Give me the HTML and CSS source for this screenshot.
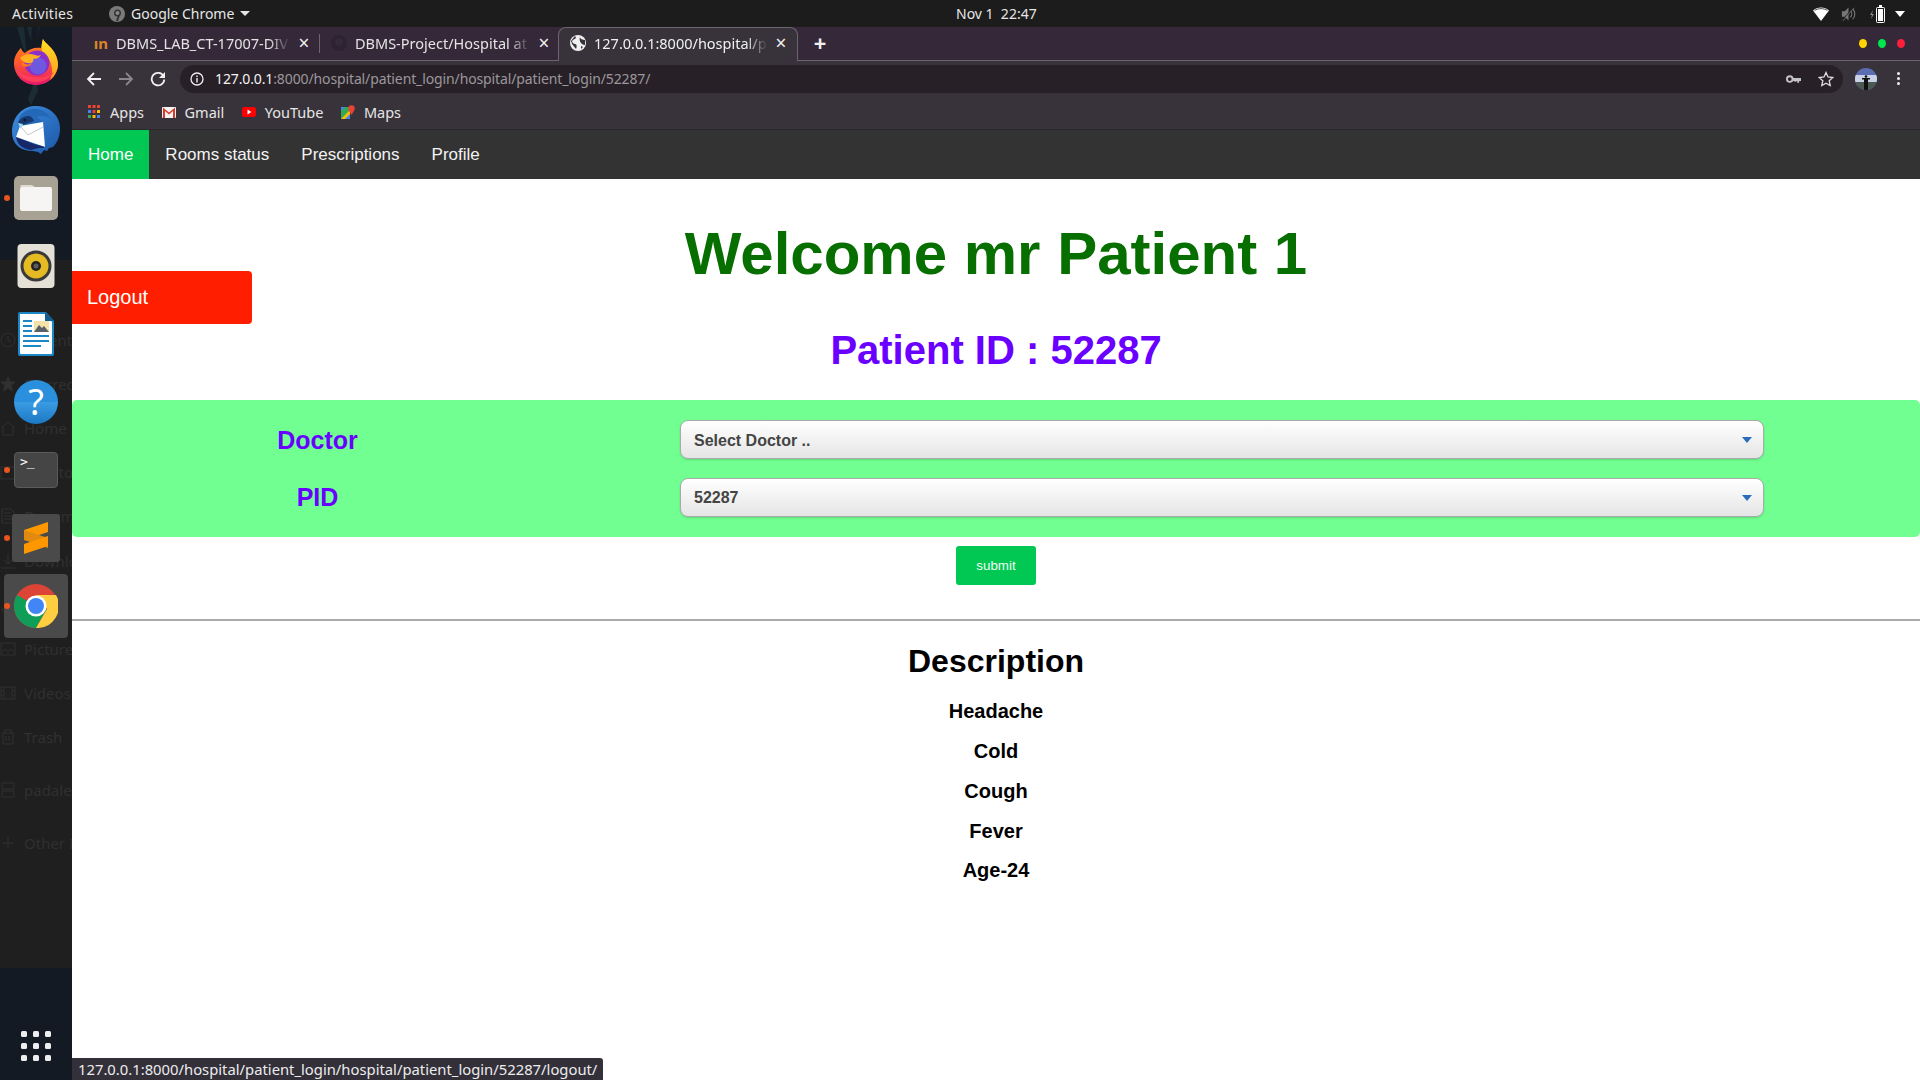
FILE: index.html
```html
<!DOCTYPE html>
<html lang="en">
<head>
    <meta charset="UTF-8">
    <meta name="viewport" content="width=device-width, initial-scale=1.0">
    <title>Patient home</title>
    <link rel="stylesheet" href="styles.css">
</head>
<body>
    <div class="topbar">
        <div class="topbar-left">
            <span class="activities">Activities</span>
            <span class="app-menu">
                <svg class="app-menu-icon" viewBox="0 0 16 16"><circle cx="8" cy="8" r="8" fill="#7a7a7a"/><circle cx="8.500" cy="7" r="3.500" fill="#333"/><path d="M10 9 8 15" stroke="#333" stroke-width="2"/><circle cx="8.500" cy="7" r="2" fill="#888"/></svg>
                Google Chrome
                <span class="caret"></span>
            </span>
        </div>
        <div class="clock">Nov 1&nbsp;&nbsp;22:47</div>
        <div class="tray">
            <svg class="tray-wifi" viewBox="0 0 16 14"><path d="M0 3.500C4 -.5 12 -.5 16 3.500L8 14Z" fill="#fff"/><path d="M1.600 3.600C5 1 11 1 14.400 3.600" fill="none" stroke="#222" stroke-width=".8"/></svg>
            <svg class="tray-sound" viewBox="0 0 16 16"><path d="M1 5h3l4-4v14l-4-4H1Z" fill="#777"/><path d="M10 4.500c2 2 2 5 0 7M12.500 2.500c3 3 3 8 0 11" fill="none" stroke="#777" stroke-width="1.200"/><path d="M1 15 13 1" stroke="#222" stroke-width="1"/><path d="M2 15.500 14 1.500" stroke="#777" stroke-width=".8"/></svg>
            <svg class="tray-battery" viewBox="0 0 15 18"><path d="M3 5 0 10h2l-1 4 3-5H2Z" fill="#888"/><rect x="6.500" y="2.500" width="8" height="15" rx="1" fill="none" stroke="#fff"/><rect x="9" y="0" width="3" height="2" fill="#fff"/><rect x="8" y="4" width="5" height="12" fill="#fff"/></svg>
            <span class="tray-caret"></span>
        </div>
    </div>

    <div class="desktop">
        <div class="dock">
            <svg class="wallpaper" viewBox="0 0 72 90"><path d="M17 0l7 0 3 30-5-12ZM27 0h5l-1 14ZM40 0l-4 14 3-14ZM36 50l-8 22 3 6 7-14ZM28 82l-3 8 4-3Z" fill="#1b2c32"/></svg>
            <div class="behind-window">
                <div class="place place-recent"><svg viewBox="0 0 16 16"><circle cx="8" cy="8" r="7"/><path d="M8 4v4l3 2"/></svg>Recent</div>
                <div class="place"><svg viewBox="0 0 16 16"><path d="M8 1l2 5h5l-4 3.500 1.500 5.500L8 12l-4.500 3L5 9.500 1 6h5Z" class="solid"/></svg>Starred</div>
                <div class="place"><svg viewBox="0 0 16 16"><path d="M1 8l7-6 7 6M3 7v8h10V7"/></svg>Home</div>
                <div class="place"><svg viewBox="0 0 16 16"><rect x="1" y="3" width="14" height="12"/></svg>Desktop</div>
                <div class="place"><svg viewBox="0 0 16 16"><path d="M2 1h9l3 3v11H2ZM4 5h7M4 8h8M4 11h8"/></svg>Documents</div>
                <div class="place"><svg viewBox="0 0 16 16"><path d="M8 1v10M4 7l4 4 4-4M1 15h14"/></svg>Downloads</div>
                <div class="place"><svg viewBox="0 0 16 16"><path d="M6 13V3l8-2v10"/><circle cx="4" cy="13" r="2"/><circle cx="12" cy="11" r="2"/></svg>Music</div>
                <div class="place"><svg viewBox="0 0 16 16"><rect x="1" y="2" width="14" height="12"/><path d="M1 12l4-4 3 3 3-3 4 4"/></svg>Pictures</div>
                <div class="place"><svg viewBox="0 0 16 16"><rect x="1" y="2" width="14" height="12"/><path d="M4 2v12M12 2v12M1 6h3M1 10h3M12 6h3M12 10h3"/></svg>Videos</div>
                <div class="place"><svg viewBox="0 0 16 16"><path d="M2 4h12M5 4V1h6v3M3 4v11h10V4M6 7v5M9 7v5"/></svg>Trash</div>
                <div class="place place-gap"><svg viewBox="0 0 16 16"><rect x="2" y="1" width="12" height="6"/><rect x="2" y="9" width="12" height="6"/></svg>padalex</div>
                <div class="place place-gap"><svg viewBox="0 0 16 16"><path d="M8 2v12M2 8h12"/></svg>Other Locations</div>
            </div>

            <div class="dock-list">
                <div class="dock-item">
                    <svg class="icon-fox" viewBox="0 0 44 46">
                        <defs>
                            <linearGradient id="foxBody" x1="0" y1="0" x2="0" y2="1"><stop offset="0" stop-color="#ff8a1f"/><stop offset=".5" stop-color="#ff5a2e"/><stop offset="1" stop-color="#e5176f"/></linearGradient>
                            <linearGradient id="foxTail" x1="0" y1="0" x2="0" y2="1"><stop offset="0" stop-color="#ffe226"/><stop offset="1" stop-color="#ff9a1e"/></linearGradient>
                        </defs>
                        <path d="M7 9c1 3 2 4 4 5 4-4 10-6 16-5 1-4 1-7 2-9 2 5 14 10 15 25 0 12-10 21-22 21C10 46 0 37 0 24 0 18 3 13 7 9Z" fill="url(#foxBody)"/>
                        <path d="M29 0c2 5 14 10 15 25 0 6-3 12-8 16 4-8 3-20-8-29-1-4 0-8 1-12Z" fill="url(#foxTail)"/>
                        <circle cx="23" cy="24" r="12.500" fill="#8a2fc9"/>
                        <circle cx="24" cy="27" r="8.500" fill="#6e58e0"/>
                        <path d="M6 19c4-4 10-5 15-3 2 1 4 1 6 0-2 3-5 4-8 4 1 2 0 3-2 4-4 1-9-1-11-5Z" fill="#ffb020"/>
                        <path d="M8 23c3 3 8 3 10 1-1 3-6 5-10 3Z" fill="#ff7a1f"/>
                        <path d="M2 30c3 8 11 13 20 13 8 0 14-4 18-10-5 4-11 6-17 5-9 0-16-2-21-8Z" fill="#ff3f5a"/>
                    </svg>
                </div>
                <div class="dock-item">
                    <svg class="icon-48" viewBox="0 0 48 48">
                        <defs><linearGradient id="birdBody" x1="0" y1="0" x2="1" y2="1"><stop offset="0" stop-color="#3f8ee0"/><stop offset="1" stop-color="#1c57a8"/></linearGradient></defs>
                        <path d="M22 0c14-1 26 9 26 22 0 9-3 15-7 19l-4 1-2 3-3-1-3 4-3-2-5-1C8 45 0 38 0 26 0 12 9 1 22 0Z" fill="url(#birdBody)"/>
                        <path d="M7 12c3-6 10-10 18-9 7 1 12 5 14 10-4-3-10-4-14-2l6 5-22 4Z" fill="#2468b8"/>
                        <path d="M6 16c2-3 6-6 10-6 3 0 5 2 6 5l-14 5Z" fill="#16386f"/>
                        <path d="M8 20 31 16 33 41 4 31Z" fill="#fff"/>
                        <path d="M8 20l8 9 15-8" fill="none" stroke="#b8b8c0" stroke-width=".8"/>
                        <path d="M4 31c1 7 6 12 15 13l8-2 4 0 2-1-11-3Z" fill="#16286a"/>
                        <circle cx="13" cy="14" r="1.500" fill="#0e1c36"/>
                        <path d="M6 17l5 1-2 5Z" fill="#9fdcf0"/>
                    </svg>
                </div>
                <div class="dock-item">
                    <span class="dock-dot"></span>
                    <svg class="icon-44" viewBox="0 0 44 44">
                        <rect width="44" height="44" rx="5" fill="#a8a294"/>
                        <path d="M6 11a2 2 0 0 1 2-2h10l4 3H8Z" fill="#dedbd3"/>
                        <path d="M6 13c0-1 1-2 2-2h28a2 2 0 0 1 2 2v20a2 2 0 0 1-2 2H8a2 2 0 0 1-2-2Z" fill="#f6f5f4"/>
                    </svg>
                </div>
                <div class="dock-item">
                    <svg class="icon-44" viewBox="0 0 44 44">
                        <rect x="3.500" width="37" height="44" rx="4" fill="#e4e0d6"/>
                        <circle cx="22" cy="22" r="15.500" fill="#3a3a3a"/>
                        <circle cx="22" cy="22" r="12.500" fill="#e5bb24"/>
                        <circle cx="22" cy="22" r="5" fill="#222"/>
                        <circle cx="22" cy="22" r="2.500" fill="#5c5c5c"/>
                    </svg>
                </div>
                <div class="dock-item">
                    <svg class="icon-44" viewBox="0 0 44 44">
                        <path d="M4 2a2 2 0 0 1 2-2h26l8 9v33a2 2 0 0 1-2 2H6a2 2 0 0 1-2-2Z" fill="#1d87c6"/>
                        <path d="M6 2h25l7 8v31a1 1 0 0 1-1 1H7a1 1 0 0 1-1-1Z" fill="#fff"/>
                        <path d="M31 0l9 9h-9Z" fill="#0f5d8f"/>
                        <rect x="9" y="8" width="9" height="2" fill="#1d87c6"/>
                        <rect x="9" y="13" width="9" height="2" fill="#1d87c6"/>
                        <rect x="9" y="18" width="9" height="2" fill="#1d87c6"/>
                        <rect x="9" y="23" width="26" height="2" fill="#1d87c6"/>
                        <rect x="9" y="28" width="26" height="2" fill="#1d87c6"/>
                        <rect x="9" y="33" width="18" height="2" fill="#1d87c6"/>
                        <rect x="20" y="9" width="15" height="11" fill="#f3e3a8"/>
                        <path d="M20 20l5-7 3 3 2-2 5 6Z" fill="#5a6068"/>
                    </svg>
                </div>
                <div class="dock-item">
                    <svg class="icon-44" viewBox="0 0 44 44">
                        <defs><linearGradient id="helpBall" x1="0" y1="0" x2="0" y2="1"><stop offset="0" stop-color="#2a8fdc"/><stop offset=".5" stop-color="#2a8fdc"/><stop offset=".5" stop-color="#3a9ce2"/><stop offset="1" stop-color="#1c78c4"/></linearGradient></defs>
                        <circle cx="22" cy="22" r="22" fill="url(#helpBall)"/>
                        <text x="22" y="35" class="help-mark" text-anchor="middle">?</text>
                    </svg>
                </div>
                <div class="dock-item">
                    <span class="dock-dot"></span>
                    <div class="terminal-tile"><span>&gt;_</span></div>
                </div>
                <div class="dock-item">
                    <span class="dock-dot"></span>
                    <svg class="icon-48" viewBox="0 0 48 48">
                        <rect width="48" height="48" rx="3" fill="#4a4a4a"/>
                        <path d="M36 8v10L12 26V16Z" fill="#ff9800"/>
                        <path d="M12 26l24 8v-10L12 16Z" fill="#e08a10"/>
                        <path d="M12 30l24-8v10L12 40Z" fill="#ff9800"/>
                    </svg>
                </div>
                <div class="dock-item dock-item-active">
                    <span class="dock-dot"></span>
                    <svg class="icon-44" viewBox="0 0 44 44">
                        <circle cx="22" cy="22" r="22" fill="#db4437"/>
                        <path d="M22 22 3 11A22 22 0 0 0 22 44l11-19Z" fill="#0f9d58"/>
                        <path d="M22 11h20A22 22 0 0 1 22 44l11-19Z" fill="#ffcd40"/>
                        <circle cx="22" cy="22" r="10.500" fill="#fff"/>
                        <circle cx="22" cy="22" r="8" fill="#4285f4"/>
                    </svg>
                </div>
            </div>

            <div class="apps-grid">
                <i></i><i></i><i></i><i></i><i></i><i></i><i></i><i></i><i></i>
            </div>
        </div>

        <div class="browser">
            <div class="tabstrip">
                <div class="tab tab-first">
                    <span class="tab-favicon favicon-in">ın</span>
                    <span class="tab-title">DBMS_LAB_CT-17007-DIV</span>
                    <span class="tab-close">×</span>
                </div>
                <div class="tab tab-second">
                    <svg class="tab-favicon" viewBox="0 0 16 16"><circle cx="8" cy="8" r="8" fill="#2d2232"/><circle cx="8" cy="7" r="4" fill="#352839"/></svg>
                    <span class="tab-title">DBMS-Project/Hospital at</span>
                    <span class="tab-close">×</span>
                </div>
                <div class="tab tab-active">
                    <svg class="tab-favicon" viewBox="0 0 16 16"><circle cx="8" cy="8" r="8" fill="#f0f0f0"/><path d="M5 1c2 2 0 3-2 4s0 4 2 4 2 3 1 5L2 9 1 6ZM10 2c0 2 3 3 5 3l0 5c-2 0-3-1-4-2s-2-4-1-6ZM11 11l2 1-2 2Z" fill="#38333a"/></svg>
                    <span class="tab-title">127.0.0.1:8000/hospital/p</span>
                    <span class="tab-close">×</span>
                </div>
                <span class="tab-new">+</span>
                <div class="window-controls">
                    <span class="wc wc-yellow"></span>
                    <span class="wc wc-green"></span>
                    <span class="wc wc-red"></span>
                </div>
            </div>

            <div class="toolbar">
                <svg class="tool-icon" viewBox="0 0 16 16"><path d="M15 8H2M8 2 2 8l6 6" class="tool-line"/></svg>
                <svg class="tool-icon tool-off" viewBox="0 0 16 16"><path d="M1 8h13M8 2l6 6-6 6" class="tool-line"/></svg>
                <svg class="tool-icon" viewBox="0 0 16 16"><path d="M13.500 5A6.300 6.300 0 1 0 14.300 8.500" class="tool-line"/><path d="M15 1v6H9Z" fill="#f1f1f1"/></svg>
                <div class="omnibox">
                    <svg class="omni-info" viewBox="0 0 14 14"><circle cx="7" cy="7" r="6" fill="none" stroke="#eee" stroke-width="1.300"/><rect x="6.300" y="6" width="1.400" height="4.500" fill="#eee"/><rect x="6.300" y="3.500" width="1.400" height="1.500" fill="#eee"/></svg>
                    <span class="url"><b>127.0.0.1</b>:8000/hospital/patient_login/hospital/patient_login/52287/</span>
                    <svg class="omni-key" viewBox="0 0 16 10"><circle cx="4" cy="5" r="3" fill="none" stroke="#c4c4c4" stroke-width="2"/><path d="M7 4h9v3h-2v2h-2V7h-1v1H9V7H7Z" fill="#c4c4c4"/></svg>
                    <svg class="omni-star" viewBox="0 0 16 16"><path d="M8 1.500l2 4.500 4.800.5-3.600 3.200 1 4.800L8 12.200 3.800 14.500l1-4.800L1.200 6.500 6 6Z" fill="none" stroke="#ddd" stroke-width="1.300"/></svg>
                </div>
                <svg class="avatar" viewBox="0 0 22 22">
                    <defs><clipPath id="avatarClip"><circle cx="11" cy="11" r="11"/></clipPath></defs>
                    <g clip-path="url(#avatarClip)">
                        <rect width="22" height="22" fill="#5a6db0"/>
                        <rect y="7" width="22" height="7" fill="#c9d2e6"/>
                        <rect y="14" width="22" height="8" fill="#4a5a50"/>
                        <path d="M7 10h8v1.500h-2V22H9V11.500H7Z" fill="#111"/>
                        <circle cx="11" cy="8.500" r="1.300" fill="#111"/>
                    </g>
                </svg>
                <span class="menu-dots"><i></i><i></i><i></i></span>
            </div>

            <div class="bookmarks">
                <span class="bookmark">
                    <svg class="bm-icon" viewBox="0 0 14 14">
                        <rect x="1" y="0" width="3" height="3" fill="#ea4335"/><rect x="5.500" y="0" width="3" height="3" fill="#ea4335"/><rect x="10" y="0" width="3" height="3" fill="#ea4335"/>
                        <rect x="1" y="5" width="3" height="3" fill="#4285f4"/><rect x="5.500" y="5" width="3" height="3" fill="#ea4335"/><rect x="10" y="5" width="3" height="3" fill="#fbbc05"/>
                        <rect x="1" y="10" width="3" height="3" fill="#34a853"/><rect x="5.500" y="10" width="3" height="3" fill="#fbbc05"/><rect x="10" y="10" width="3" height="3" fill="#4285f4"/>
                    </svg>
                    Apps
                </span>
                <span class="bookmark">
                    <svg class="bm-icon" viewBox="0 0 14 14"><rect y="2" width="14" height="11" rx="1" fill="#f4f4f4"/><path d="M1 2.500 7 7.500l6-5V13h-2V6L7 9.500 3 6v7H1Z" fill="#d93a2b"/></svg>
                    Gmail
                </span>
                <span class="bookmark">
                    <svg class="bm-icon" viewBox="0 0 14 14"><rect y="2" width="14" height="10" rx="2.500" fill="#f00"/><path d="M5.500 4.500 9.500 7l-4 2.500Z" fill="#fff"/></svg>
                    YouTube
                </span>
                <span class="bookmark">
                    <svg class="bm-icon" viewBox="0 0 14 14"><path d="M0 2h9v12H0Z" fill="#34a853"/><path d="M0 14 9 5v9Z" fill="#fbbc05"/><path d="M0 2h4l-4 4Z" fill="#4285f4"/><path d="M4 14 9 9v5Z" fill="#4285f4"/><circle cx="10.500" cy="3.500" r="3.200" fill="#ea4335"/><path d="M8 5.500 10.500 10 13 5.500Z" fill="#ea4335"/></svg>
                    Maps
                </span>
            </div>

            <nav class="navbar">
                <a class="nav-link nav-active">Home</a>
                <a class="nav-link">Rooms status</a>
                <a class="nav-link">Prescriptions</a>
                <a class="nav-link">Profile</a>
            </nav>

            <main class="page">
                <div class="page-head">
                    <a class="logout">Logout</a>
                    <div class="titles">
                        <h1 class="welcome">Welcome mr Patient 1</h1>
                        <h2 class="patient-id">Patient ID : 52287</h2>
                    </div>
                </div>

                <form>
                    <div class="form-panel">
                        <label class="form-label form-label-first">Doctor</label>
                        <div class="select-wrap">
                            <select class="form-select form-select-first"><option>Select Doctor ..</option></select>
                        </div>
                        <label class="form-label">PID</label>
                        <div class="select-wrap">
                            <select class="form-select"><option>52287</option></select>
                        </div>
                    </div>
                    <div class="submit-row"><button type="button" class="submit-btn">submit</button></div>
                </form>

                <hr class="divider">

                <section class="description">
                    <h2>Description</h2>
                    <p>Headache</p>
                    <p>Cold</p>
                    <p>Cough</p>
                    <p>Fever</p>
                    <p>Age-24</p>
                </section>
            </main>

            <div class="status-bubble">127.0.0.1:8000/hospital/patient_login/hospital/patient_login/52287/logout/</div>
        </div>
    </div>
</body>
</html>
```

FILE: styles.css
```css
html, body {
    height: 100%;
    margin: 0;
    padding: 0;
    overflow: hidden;
    font-family: "Liberation Sans", Arial, sans-serif;
    background: #fff;
}

/* gnome top bar */
.topbar {
    height: 27px;
    background: #1c1c1c;
    color: #e6e6e6;
    font-family: "Noto Sans", sans-serif;
    font-size: 14px;
    display: grid;
    grid-template-columns: 956px auto 1fr;
    align-items: center;
}

.topbar-left {
    display: flex;
    align-items: center;
    padding-left: 12px;
}

.activities {
    width: 97px;
    letter-spacing: 0.3px;
}

.app-menu {
    display: flex;
    align-items: center;
    gap: 6px;
}

.app-menu-icon {
    width: 16px;
    height: 16px;
}

.caret {
    width: 0;
    height: 0;
    border-left: 5px solid transparent;
    border-right: 5px solid transparent;
    border-top: 5px solid #e6e6e6;
}

.tray {
    display: flex;
    align-items: center;
    justify-content: flex-end;
    padding-right: 15px;
}

.tray-wifi {
    width: 16px;
    height: 14px;
    margin-right: 12px;
}

.tray-sound {
    width: 15px;
    height: 16px;
    margin-right: 14px;
}

.tray-battery {
    width: 15px;
    height: 18px;
    margin-right: 10px;
}

.tray-caret {
    width: 0;
    height: 0;
    border-left: 5px solid transparent;
    border-right: 5px solid transparent;
    border-top: 6px solid #fff;
}

.desktop {
    height: 1053px;
    display: flex;
}

/* ubuntu dock */
.dock {
    width: 72px;
    flex: none;
    position: relative;
    overflow: hidden;
    background: #141a24;
}

.wallpaper {
    position: absolute;
    left: 0;
    top: 0;
    width: 72px;
    height: 90px;
}

.behind-window {
    position: absolute;
    left: 0;
    top: 233px;
    width: 200px;
    height: 708px;
    padding-top: 58px;
    box-sizing: border-box;
    background: #1f1f1f;
    color: #303030;
    font-family: "Noto Sans", sans-serif;
    font-size: 15px;
}

.place {
    height: 44.1px;
    display: flex;
    align-items: center;
    gap: 8px;
    white-space: nowrap;
}

.place svg {
    width: 16px;
    height: 16px;
    flex: none;
    fill: none;
    stroke: #303030;
    stroke-width: 1;
}

.place svg .solid {
    fill: #303030;
}

.place-gap {
    margin-top: 9px;
}

.dock-list {
    position: relative;
    padding-top: 1px;
}

.dock-item {
    height: 68px;
    display: flex;
    align-items: center;
    justify-content: center;
    position: relative;
}

.dock-item-active::before {
    content: "";
    position: absolute;
    left: 4px;
    right: 4px;
    top: 2px;
    bottom: 2px;
    border-radius: 4px;
    background: #4a4a4a;
}

.dock-item-active svg {
    position: relative;
}

.dock-dot {
    position: absolute;
    z-index: 1;
    left: 4px;
    top: 31px;
    width: 6px;
    height: 6px;
    border-radius: 50%;
    background: #e9541f;
}

.icon-44 {
    width: 44px;
    height: 44px;
}

.icon-48 {
    width: 48px;
    height: 48px;
}

.icon-fox {
    width: 44px;
    height: 46px;
}

.help-mark {
    font-family: "Noto Sans", sans-serif;
    font-size: 36px;
    fill: #fff;
}

.terminal-tile {
    width: 44px;
    height: 36px;
    box-sizing: border-box;
    padding: 2px 0 0 5px;
    border: 1px solid #5a5a5a;
    border-radius: 4px;
    background: #454545;
    color: #fff;
    font-family: "DejaVu Sans Mono", monospace;
    font-size: 13px;
    line-height: 14px;
    letter-spacing: -1px;
}

.apps-grid {
    position: absolute;
    left: 21px;
    top: 1004px;
    display: grid;
    grid-template-columns: repeat(3, 6px);
    grid-auto-rows: 6px;
    gap: 6px;
}

.apps-grid i {
    border-radius: 1.5px;
    background: #eee;
}

/* chrome window */
.browser {
    flex: 1;
    min-width: 0;
    display: flex;
    flex-direction: column;
    position: relative;
}

.tabstrip {
    height: 34px;
    box-sizing: border-box;
    border-bottom: 1px solid #6c646e;
    background: #352839;
    display: flex;
    color: #e4e4e4;
    font-family: "Noto Sans", sans-serif;
    font-size: 14.5px;
}

.tab {
    height: 33px;
    display: flex;
    align-items: center;
    box-sizing: border-box;
    position: relative;
}

.tab-first {
    width: 248px;
    padding: 0 8px 2px 20px;
}

.tab-first::after {
    content: "";
    position: absolute;
    right: 0;
    top: 7px;
    bottom: 7px;
    width: 1px;
    background: #6c646e;
}

.tab-second {
    width: 238px;
    padding: 0 6px 2px 11px;
}

.tab-active {
    width: 240px;
    height: 34px;
    padding: 0 8px 3px 11px;
    background: #38333a;
    border: 1px solid #6c646e;
    border-bottom: none;
    border-radius: 8px 8px 0 0;
    color: #f0f0f0;
}

.tab-favicon {
    width: 16px;
    height: 16px;
    flex: none;
    margin-right: 8px;
}

.favicon-in {
    color: #d9862a;
    font-weight: 700;
    font-size: 15px;
    line-height: 16px;
    text-align: right;
}

.tab-title {
    flex: 1;
    overflow: hidden;
    white-space: nowrap;
    -webkit-mask-image: linear-gradient(to right, #000 85%, transparent 97%);
    mask-image: linear-gradient(to right, #000 85%, transparent 97%);
}

.tab-close {
    width: 16px;
    flex: none;
    text-align: center;
    font-size: 19px;
    line-height: 16px;
    color: #eee;
}

.tab-new {
    width: 44px;
    text-align: center;
    font-size: 22px;
    line-height: 31px;
    font-weight: 700;
    color: #f0f0f0;
}

.window-controls {
    margin-left: auto;
    display: flex;
    align-items: center;
    gap: 11px;
    padding-right: 15px;
}

.wc {
    width: 8px;
    height: 9px;
    border-radius: 50%;
}

.wc-yellow {
    background: #ffd400;
}

.wc-green {
    background: #00e64d;
}

.wc-red {
    background: #ff1f3d;
}

.toolbar {
    height: 35px;
    flex: none;
    background: #38333a;
    display: flex;
    align-items: center;
    padding-left: 14px;
    box-sizing: border-box;
}

.tool-icon {
    width: 16px;
    height: 16px;
    margin-right: 16px;
}

.tool-line {
    fill: none;
    stroke: #f1f1f1;
    stroke-width: 1.8;
}

.tool-off .tool-line {
    stroke: #8a868c;
}

.omnibox {
    width: 1663px;
    height: 28px;
    margin-left: -2px;
    border-radius: 14px;
    background: #272127;
    display: flex;
    align-items: center;
    padding: 0 9px 0 10px;
    box-sizing: border-box;
    font-family: "Noto Sans", sans-serif;
    font-size: 14px;
    color: #9b979d;
}

.omni-info {
    width: 14px;
    height: 14px;
    margin-right: 11px;
}

.url {
    flex: 1;
    letter-spacing: -0.12px;
}

.url b {
    font-weight: 400;
    color: #f2f2f2;
}

.omni-key {
    width: 15px;
    height: 10px;
    margin-right: 17px;
}

.omni-star {
    width: 16px;
    height: 16px;
}

.avatar {
    width: 22px;
    height: 22px;
    margin-left: 12px;
}

.menu-dots {
    margin-left: 20px;
    display: grid;
    gap: 2px;
}

.menu-dots i {
    width: 3px;
    height: 3px;
    border-radius: 50%;
    background: #eee;
}

.bookmarks {
    height: 34px;
    flex: none;
    box-sizing: border-box;
    padding: 0 0 2px 15px;
    border-bottom: 1px solid #2b282c;
    background: #38333a;
    display: flex;
    align-items: center;
    gap: 17.5px;
    color: #e6e6e6;
    font-family: "Noto Sans", sans-serif;
    font-size: 14.5px;
}

.bookmark {
    display: flex;
    align-items: center;
    gap: 9px;
}

.bm-icon {
    width: 14px;
    height: 14px;
}

/* page inside the browser */
.navbar {
    height: 49px;
    flex: none;
    background: #333;
    display: flex;
    font-size: 17px;
}

.nav-link {
    padding: 0 16px;
    line-height: 49px;
    color: #f2f2f2;
}

.nav-active {
    background: #00c853;
    color: #fff;
}

.page {
    flex: 1;
    background: #fff;
}

.page-head {
    height: 221px;
    display: grid;
}

.logout {
    grid-area: 1 / 1;
    justify-self: start;
    align-self: start;
    width: 180px;
    height: 53px;
    margin-top: 92px;
    box-sizing: border-box;
    padding-left: 15px;
    border-radius: 0 4px 4px 0;
    background: #ff1e00;
    color: #fff;
    font-size: 20px;
    line-height: 52px;
}

.titles {
    grid-area: 1 / 1;
    text-align: center;
}

.welcome {
    margin: 40px 0 0;
    font-size: 60px;
    line-height: 69px;
    color: #066f00;
}

.patient-id {
    margin: 39px 0 0;
    font-size: 40px;
    line-height: 46px;
    color: #6a00ff;
}

.form-panel {
    height: 137px;
    box-sizing: border-box;
    padding: 20px 156px 0 0;
    border-radius: 5px;
    background: #70ff90;
    display: grid;
    grid-template-columns: 491px 1fr;
    grid-auto-rows: 39px;
    row-gap: 19px;
    align-items: center;
}

.form-label {
    text-align: center;
    font-size: 25px;
    font-weight: 700;
    color: #6a00ff;
}

.form-label-first {
    padding-top: 2px;
}

.select-wrap {
    margin-left: 117px;
    position: relative;
}

.select-wrap::after {
    content: "";
    position: absolute;
    right: 12px;
    top: 17px;
    border-left: 5px solid transparent;
    border-right: 5px solid transparent;
    border-top: 6px solid #2a6ebb;
}

.form-select {
    display: block;
    width: 100%;
    height: 39px;
    padding: 0 13px;
    appearance: none;
    border: 1px solid #aaa;
    border-radius: 8px;
    background: linear-gradient(#fff, #e5e5e5);
    box-shadow: 0 1px 2px rgba(0, 0, 0, 0.15);
    font-family: "Liberation Sans", Arial, sans-serif;
    font-size: 16px;
    font-weight: 700;
    color: #444;
}

.form-select-first {
    padding-top: 2px;
}

.submit-row {
    text-align: center;
    padding-top: 9px;
}

.submit-btn {
    width: 80px;
    height: 39px;
    border: none;
    border-radius: 3px;
    background: #00c853;
    color: #f2fff6;
    font-family: "Liberation Sans", Arial, sans-serif;
    font-size: 13.33px;
}

.divider {
    margin: 34px 0 0;
    border: none;
    border-top: 2px solid #aaa;
}

.description {
    text-align: center;
    color: #000;
}

.description h2 {
    margin: 22px 0 0;
    padding-bottom: 3.5px;
    font-size: 32px;
    line-height: 37px;
}

.description p {
    margin: 16.8px 0 0;
    font-size: 20px;
    line-height: 23px;
    font-weight: 700;
}

.status-bubble {
    position: absolute;
    left: 0;
    bottom: 0;
    height: 22px;
    padding: 0 6px;
    border-radius: 0 3px 0 0;
    background: #33303a;
    color: #ececec;
    font-family: "Noto Sans", sans-serif;
    font-size: 14.8px;
    line-height: 22px;
    white-space: nowrap;
}
```
